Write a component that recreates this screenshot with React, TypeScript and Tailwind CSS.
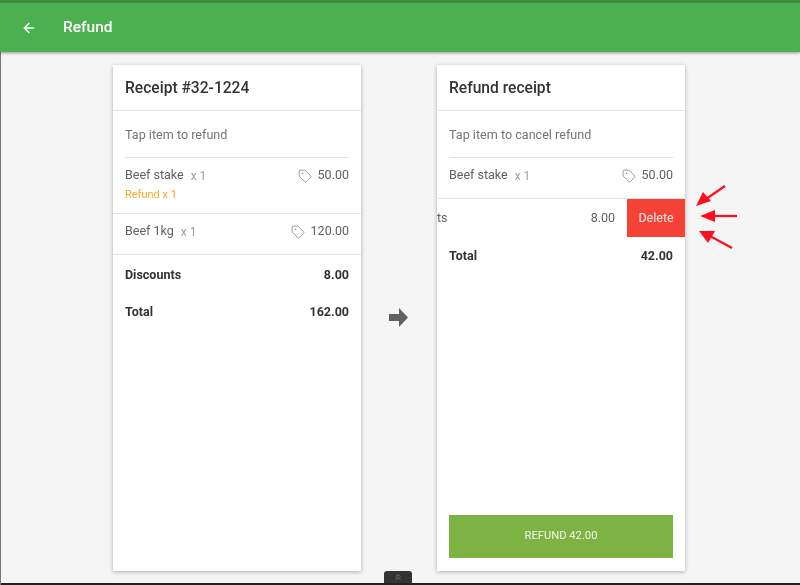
import { ArrowLeft, ChevronsUp, Tag } from 'lucide-react';

function ItemRow({ name, qty, price, refund, className }: { name: string; qty: string; price: string; refund?: string; className: string }) {
    return (
        <div className={className}>
            <div className="flex items-center h-[18px] text-[12.5px]">
                <span className="text-[#616161]">{name}</span>
                <span className="text-[#9e9e9e] ml-[7px] text-[12px]">{qty}</span>
                <Tag className="ml-auto mr-[6px] text-[#757575]" size={14} strokeWidth={1.25} />
                <span className="text-[#616161]">{price}</span>
            </div>
            {refund && <div className="text-[11px] leading-4 mt-[2px] text-[#ffa726]">{refund}</div>}
        </div>
    );
}

function SummaryRow({ label, value, className }: { label: string; value: string; className: string }) {
    return (
        <div className={className}>
            <span>{label}</span>
            <span>{value}</span>
        </div>
    );
}

function RedArrows() {
    return (
        <svg className="absolute left-[690px] top-[180px]" width="56" height="74" viewBox="0 0 56 74" fill="none">
            <g stroke="#fb0f1f" strokeWidth="2.2">
                <path d="M35 6 L16 19" />
                <path d="M47 36 L22 36" />
                <path d="M42 68 L20 56" />
            </g>
            <g fill="#fb0f1f">
                <path d="M6 26 L13 12 L21 21 Z" />
                <path d="M10 36 L25 30 L25 42 Z" />
                <path d="M9 51 L25 51 L18 63 Z" />
            </g>
        </svg>
    );
}

export default function App() {
    return (
        <main className="relative flex flex-col h-[585px] overflow-hidden bg-[#f5f5f5] font-['Roboto',sans-serif] blur-[0.4px]">
            {/* App bar */}
            <header className="h-[52px] shrink-0 flex items-center bg-[#4caf50] border-t-[3px] border-[#388e3c] shadow-[0_1px_3px_rgba(0,0,0,0.4)] z-10 text-white">
                <ArrowLeft className="ml-[21px] mt-[1px]" size={16} strokeWidth={2} />
                <span className="ml-[26px] mt-[1px] text-[15.5px] font-medium">Refund</span>
            </header>

            <div className="flex-1 flex pl-[113px] pt-[13px]">
                {/* Original receipt */}
                <section className="w-[248px] h-[506px] bg-white shadow-[0_1px_4px_rgba(0,0,0,0.3)]">
                    <h1 className="h-[46px] flex items-center pt-[3px] px-3 border-b border-[#e5e5e5] text-[15.6px] font-medium text-[#333333]">Receipt #32-1224</h1>
                    <div className="mx-3 h-[47px] flex items-center pt-[2px] border-b border-[#e0e0e0] text-[12.6px] text-[#757575]">Tap item to refund</div>
                    <ItemRow className="px-3 pt-[8.5px] h-[56px] border-b border-[#e5e5e5]" name="Beef stake" qty="x 1" price="50.00" refund="Refund x 1" />
                    <ItemRow className="px-3 pt-[8.5px] h-[41px] border-b border-[#e5e5e5]" name="Beef 1kg" qty="x 1" price="120.00" />
                    <SummaryRow className="flex justify-between items-center px-3 mt-[10px] h-[20px] text-[12.5px] font-bold text-[#333333]" label="Discounts" value="8.00" />
                    <SummaryRow className="flex justify-between items-center px-3 mt-[17px] h-[20px] text-[12.5px] font-bold text-[#333333]" label="Total" value="162.00" />
                </section>

                <div className="w-[76px] h-[506px] flex items-center justify-center pr-[1px]">
                    <svg width="19" height="19" viewBox="0 0 19 19" className="-mt-[1px]">
                        <path d="M0 6 H10 V0 L19 9.5 L10 19 V13 H0 Z" fill="#616161" />
                    </svg>
                </div>

                {/* Refund receipt */}
                <section className="w-[248px] h-[506px] flex flex-col bg-white shadow-[0_1px_4px_rgba(0,0,0,0.3)]">
                    <h2 className="h-[46px] shrink-0 flex items-center pt-[3px] px-3 border-b border-[#e5e5e5] text-[15.6px] font-medium text-[#333333]">Refund receipt</h2>
                    <div className="mx-3 h-[47px] shrink-0 flex items-center pt-[2px] border-b border-[#e0e0e0] text-[12.6px] text-[#757575]">Tap item to cancel refund</div>
                    <ItemRow className="px-3 pt-[8.5px] h-[41px] shrink-0 border-b border-[#e5e5e5]" name="Beef stake" qty="x 1" price="50.00" />
                    {/* Swiped discount row */}
                    <div className="h-[38px] shrink-0 flex items-center text-[12.5px] text-[#616161]">
                        <span>ts</span>
                        <span className="ml-auto mr-3">8.00</span>
                        <button className="w-[58px] h-full bg-[#f44336] text-[#fbe9e7] text-[12.5px]">Delete</button>
                    </div>
                    <SummaryRow className="flex justify-between items-center px-3 mt-[9px] h-[20px] text-[12.5px] font-bold text-[#333333]" label="Total" value="42.00" />
                    <button className="mt-auto mb-[13px] mx-3 h-[43px] bg-[#7cb342] text-[#f1f8e9] text-[11.2px]">REFUND 42.00</button>
                </section>
            </div>

            <RedArrows />

            {/* Bottom drawer handle */}
            <div className="absolute left-[384px] bottom-[2px] w-[28px] h-[12px] flex items-center justify-center rounded-t-[3px] bg-[#333333]">
                <ChevronsUp className="text-[#8a8a8a]" size={10} strokeWidth={2} />
            </div>
            <div className="absolute inset-x-0 bottom-0 h-[2px] bg-[#222222]"></div>
            <div className="absolute left-0 top-[52px] bottom-0 w-[1px] bg-[#777777]"></div>
        </main>
    );
}
